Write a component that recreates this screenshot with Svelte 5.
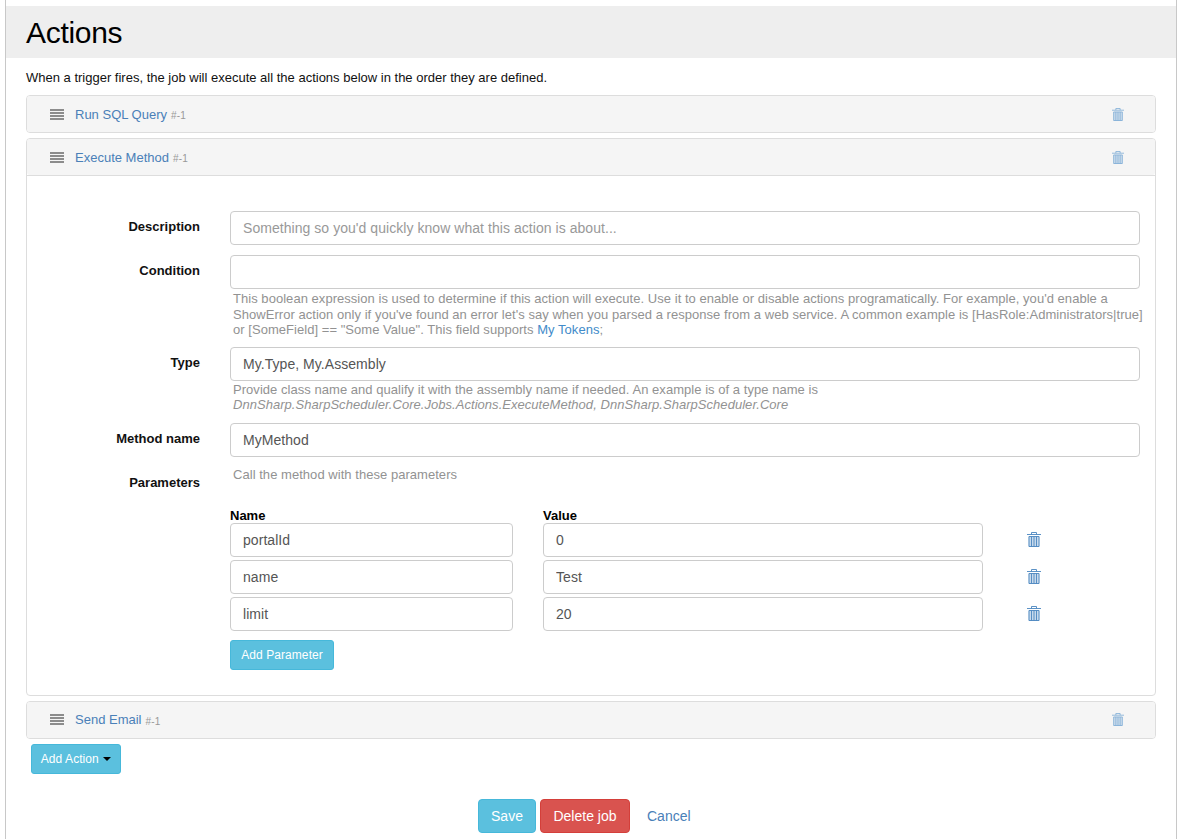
<script>
  const params = [
    { name: 'portalId', value: '0' },
    { name: 'name', value: 'Test' },
    { name: 'limit', value: '20' }
  ];
</script>

{#snippet trash(w, h)}
  <svg class="trash" viewBox="0 0 14 15" width={w} height={h} aria-hidden="true">
    <path d="M4.500 2.500V0.500h5v2" fill="none" stroke="currentColor" stroke-width="0.9" />
    <path d="M0 2.500h14" fill="none" stroke="currentColor" stroke-width="0.9" />
    <path d="M1.500 4.500h11V14a1 1 0 0 1-1 1h-9a1 1 0 0 1-1-1z" fill="currentColor" opacity="0.3" />
    <path d="M2 4.500v10M4.500 4.500v10M7 4.500v10M9.500 4.500v10M12 4.500v10M2 14.500h10M2 4.500h10" fill="none" stroke="currentColor" stroke-width="0.9" />
  </svg>
{/snippet}

{#snippet head(title)}
  <div class="panel-head">
    <span class="bars"><i></i><i></i><i></i><i></i></span>
    <a href="#a" class="title">{title}</a>
    <small>#-1</small>
    <span class="head-trash">{@render trash(12, 13)}</span>
  </div>
{/snippet}

<div class="page">
  <h1>Actions</h1>
  <div class="content">
    <p class="intro">When a trigger fires, the job will execute all the actions below in the order they are defined.</p>

    <div class="panel">{@render head('Run SQL Query')}</div>

    <div class="panel">
      {@render head('Execute Method')}
      <div class="panel-body">
        <div class="row r1">
          <label for="d">Description</label>
          <div class="field"><input id="d" placeholder="Something so you'd quickly know what this action is about..." /></div>
        </div>
        <div class="row r2">
          <label for="c">Condition</label>
          <div class="field">
            <input id="c" />
            <p class="help h3">This boolean expression is used to determine if this action will execute. Use it to enable or disable actions programatically. For example, you'd enable a<br />ShowError action only if you've found an error let's say when you parsed a response from a web service. A common example is [HasRole:Administrators|true]<br />or [SomeField] == "Some Value". This field supports <a href="#a">My Tokens</a>;</p>
          </div>
        </div>
        <div class="row r3">
          <label for="t">Type</label>
          <div class="field">
            <input id="t" value="My.Type, My.Assembly" />
            <p class="help h2">Provide class name and qualify it with the assembly name if needed. An example is of a type name is<br /><em>DnnSharp.SharpScheduler.Core.Jobs.Actions.ExecuteMethod, DnnSharp.SharpScheduler.Core</em></p>
          </div>
        </div>
        <div class="row r4">
          <label for="m">Method name</label>
          <div class="field"><input id="m" value="MyMethod" /></div>
        </div>
        <div class="row r5">
          <span class="label">Parameters</span>
          <div class="field">
            <p class="help h1">Call the method with these parameters</p>
            <div class="param-grid heads"><b>Name</b><b>Value</b></div>
            {#each params as p}
              <div class="param-grid">
                <input value={p.name} aria-label="Name" />
                <input value={p.value} aria-label="Value" />
                <span class="param-trash">{@render trash(14, 15)}</span>
              </div>
            {/each}
            <button class="btn info small add-param">Add Parameter</button>
          </div>
        </div>
      </div>
    </div>

    <div class="panel">{@render head('Send Email')}</div>

    <button class="btn info small add-action">Add Action <span class="caret"></span></button>

    <div class="footer">
      <button class="btn info big">Save</button>
      <button class="btn danger big">Delete job</button>
      <a href="#a" class="cancel">Cancel</a>
    </div>
  </div>
</div>

<style>
  :global(body) {
    margin: 0;
    background: #fff;
    font-family: "Liberation Sans", Arial, sans-serif;
    font-size: 13px;
    color: #000;
  }
  .page {
    box-sizing: border-box;
    width: 1172px;
    height: 839px;
    margin-left: 5px;
    padding-top: 6px;
    border-left: 1px solid #c8c8c8;
    border-right: 1px solid #c8c8c8;
    overflow: hidden;
  }
  h1 {
    margin: 0;
    height: 52px;
    box-sizing: border-box;
    padding-left: 20px;
    background: #eeeeee;
    font-size: 30px;
    font-weight: 400;
    line-height: 54px;
    letter-spacing: -0.3px;
    color: #000;
  }
  .content { padding: 0 20px; }
  .intro {
    margin: 0;
    height: 37px;
    line-height: 40px;
    color: #111;
  }
  .panel {
    border: 1px solid #dddddd;
    border-radius: 4px;
    margin-bottom: 5px;
    background: #fff;
    width: 1130px;
    box-sizing: border-box;
  }
  .panel-head {
    display: flex;
    align-items: center;
    height: 36px;
    padding-left: 23px;
    background: #f5f5f5;
    border-radius: 3px;
    color: #999;
  }
  .panel-body {
    border-top: 1px solid #dddddd;
    padding: 35px 15px 25px 0;
  }
  .bars {
    display: flex;
    flex-direction: column;
    gap: 1px;
    width: 14px;
    margin-right: 11px;
  }
  .bars i {
    display: block;
    height: 2px;
    background: #8c8c8c;
  }
  a { color: #428bca; text-decoration: none; }
  .title { color: #4a80b8; }
  small { font-size: 10px; margin-left: 4px; margin-top: 3px; letter-spacing: 0.2px; color: #999; }
  .head-trash { margin-left: auto; margin-right: 31px; display: flex; color: #7aaad6; }
  .trash { display: block; flex: none; }
  .row { display: flex; }
  label, .label {
    flex: 0 0 173px;
    text-align: right;
    font-weight: 700;
    font-size: 13px;
    color: #111;
    line-height: 32px;
  }
  .field { margin-left: 30px; flex: 1; min-width: 0; }
  input {
    box-sizing: border-box;
    display: block;
    width: 100%;
    height: 34px;
    padding: 6px 12px;
    border: 1px solid #cccccc;
    border-radius: 4px;
    font: 14px "Liberation Sans", Arial, sans-serif;
    letter-spacing: 0.05px;
    color: #555;
    background: #fff;
    outline: none;
  }
  input::placeholder { color: #999; opacity: 1; }
  .r1 { margin-bottom: 10px; }
  .r2 { margin-bottom: 9px; }
  .r3 { margin-bottom: 10px; }
  .r4 { margin-bottom: 10px; }
  .help {
    margin: 0;
    padding-left: 3px;
    color: #929292;
    font-size: 13px;
    line-height: 15.5px;
    letter-spacing: 0.04px;
    white-space: nowrap;
  }
  .h3 { margin-top: 2px; }
  .h2 { margin-top: 1px; }
  .h1 { height: 48px; line-height: 16px; }
  .param-grid {
    display: grid;
    grid-template-columns: 283px 440px 30px;
    column-gap: 30px;
    align-items: center;
    margin-bottom: 3px;
  }
  .param-grid.heads {
    height: 14px;
    margin: -6px 0 0;
    grid-template-columns: 283px 440px;
    font-size: 13px;
    line-height: 14px;
    color: #000;
  }
  .param-trash { margin-left: 14px; display: flex; color: #4a86c0; }
  .btn {
    display: block;
    border: 1px solid transparent;
    border-radius: 3px;
    font-family: "Liberation Sans", Arial, sans-serif;
    color: #fff;
    padding: 0;
  }
  .info { background: #5bc0de; border-color: #46b8da; }
  .danger { background: #d9534f; border-color: #d43f3a; }
  .small { font-size: 12px; height: 30px; letter-spacing: 0.08px; }
  .add-param { width: 104px; margin-top: 9px; }
  .add-action { width: 90px; margin-left: 5px; margin-top: 0; }
  .caret {
    display: inline-block;
    width: 0;
    height: 0;
    margin-left: 1px;
    vertical-align: middle;
    border-top: 4px solid #000;
    border-left: 4px solid transparent;
    border-right: 4px solid transparent;
  }
  .footer {
    display: flex;
    align-items: center;
    margin-top: 25px;
    padding-left: 452px;
  }
  .big { font-size: 14px; height: 34px; border-radius: 4px; }
  .footer .btn:nth-child(1) { width: 58px; }
  .footer .btn:nth-child(2) { width: 90px; margin-left: 4px; }
  .cancel { margin-left: 17px; font-size: 14px; color: #4a80b8; }
</style>
